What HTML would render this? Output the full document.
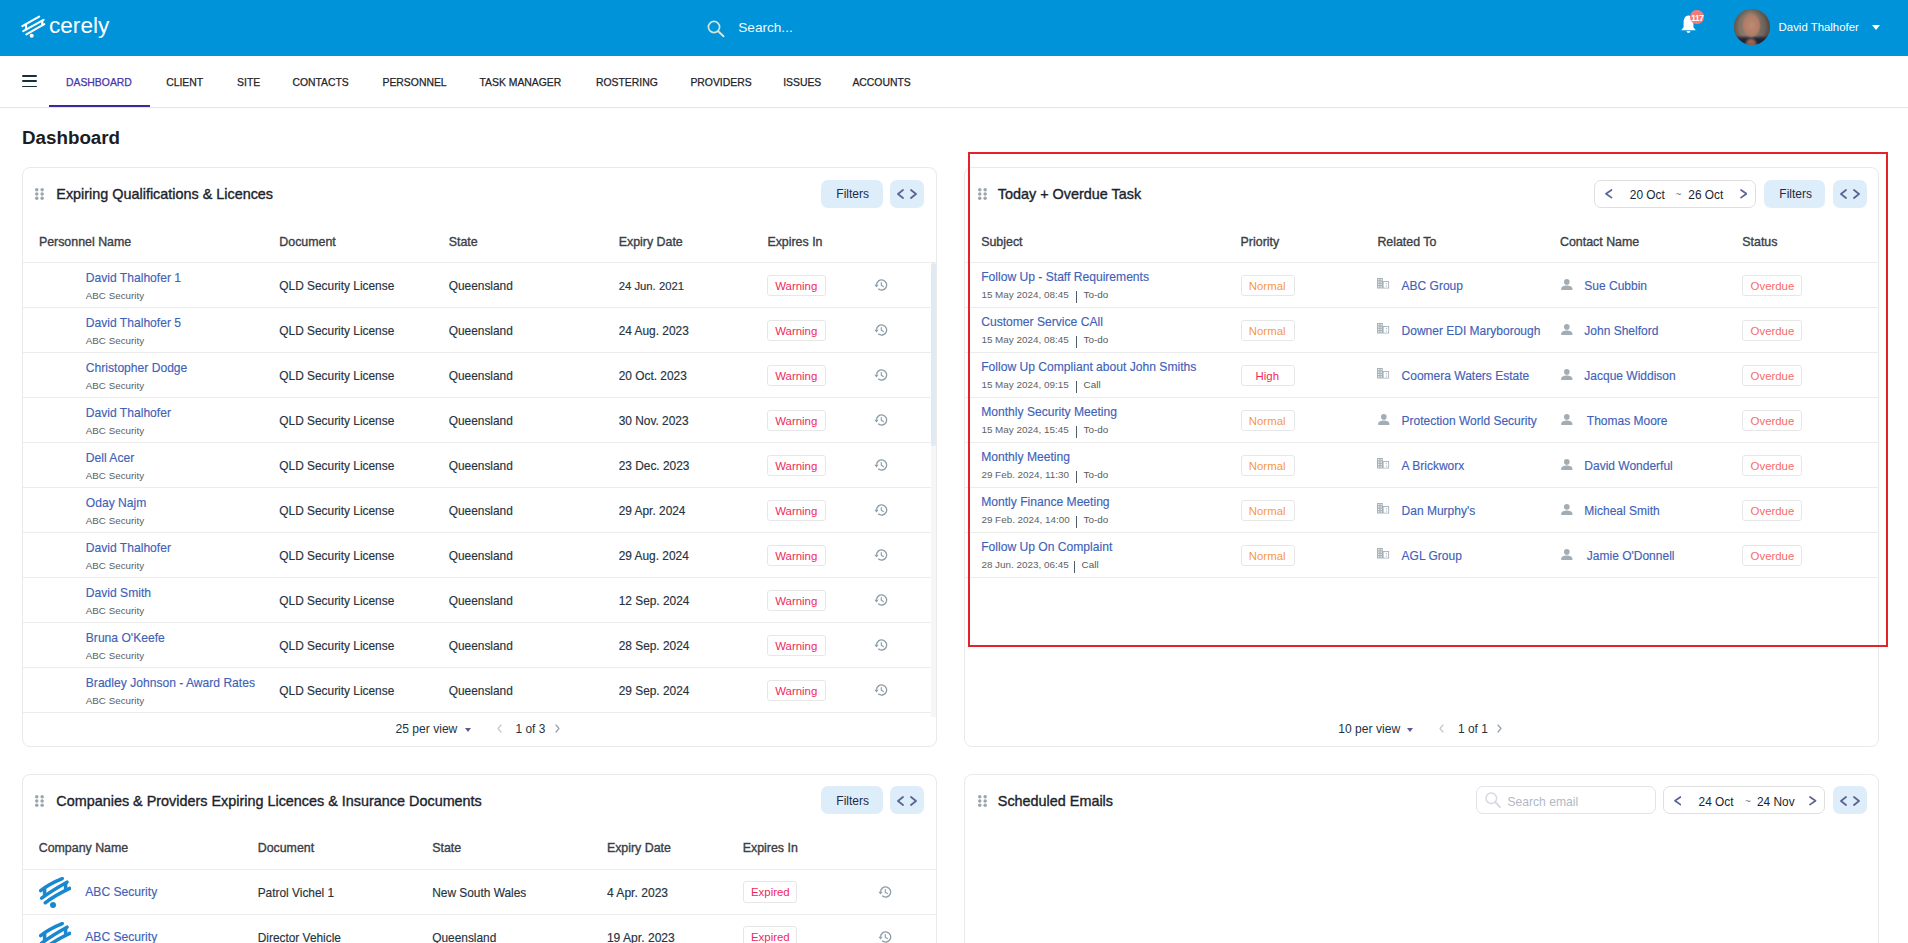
<!DOCTYPE html>
<html><head><meta charset="utf-8"><title>Dashboard</title>
<style>
html,body{margin:0;padding:0;background:#fff}
body{width:1908px;height:943px;overflow:hidden;position:relative;font-family:"Liberation Sans",sans-serif}
.a{position:absolute}
.t{position:absolute;line-height:1;white-space:nowrap}
svg.a{display:block}
</style></head><body>
<div class="a" style="left:0px;top:0px;width:1908px;height:56px;background:#0093d9"></div>
<svg class="a" style="left:20px;top:14px" width="27" height="25" viewBox="0 0 27 25"><g fill="none" stroke="#fff" stroke-width="2.1" stroke-linecap="round"><path d="M2.3 12.1 L19.2 2.7"/><path d="M3.2 17.1 L23.6 5.8"/><path d="M6.4 20.3 L24.3 10.2"/><path d="M6 10.2 L6 15.4"/><path d="M22.3 6.7 L22.3 11.2"/></g><circle cx="11.7" cy="21.8" r="2" fill="#fff"/></svg>
<div class="t" style="left:49.0px;top:15.29px;font-size:22.6px;color:#fff;font-weight:normal;">cerely</div>
<svg class="a" style="left:706px;top:19px" width="20" height="19" viewBox="0 0 20 19"><circle cx="8" cy="8" r="5.6" fill="none" stroke="#cfe6dc" stroke-width="1.7"/><path d="M12.2 12.2 L17.5 17.3" stroke="#cfe6dc" stroke-width="2" stroke-linecap="round"/></svg>
<div class="t" style="left:738.3px;top:21.44px;font-size:13.6px;color:#f2f8fc;font-weight:normal;">Search...</div>
<svg class="a" style="left:1680px;top:14px" width="17" height="20" viewBox="0 0 17 20"><path d="M8.5 1.5 C4.6 1.5 3.6 5.5 3.6 8.5 V13.2 L1.2 16.2 H15.8 L13.4 13.2 V8.5 C13.4 5.5 12.4 1.5 8.5 1.5Z" fill="#fff"/><path d="M6.6 17 H10.4 C10.4 18.3 9.6 19 8.5 19 C7.4 19 6.6 18.3 6.6 17Z" fill="#fff"/></svg>
<div class="a" style="left:1690.4px;top:10.3px;width:13.4px;height:13.4px;border-radius:50%;background:#f57b7b"></div>
<div class="t" style="left:1691.2px;top:14.05px;font-size:8.3px;color:#fff;font-weight:bold;letter-spacing:-0.3px">117</div>
<div class="a" style="left:1734px;top:9px;width:36px;height:36px;border-radius:50%;overflow:hidden;background:radial-gradient(circle 18px at 18px 18px,rgba(0,0,0,0) 0%,rgba(0,0,0,0) 72%,rgba(60,40,30,0.35) 100%),radial-gradient(ellipse 9.6px 12.5px at 17.5px 16.5px,#bd8a72 0%,#b07c67 78%,rgba(176,124,103,0) 100%),radial-gradient(ellipse 7.5px 9px at 17px 37px,#b47658 0%,#a86f55 55%,rgba(168,111,85,0) 100%),linear-gradient(180deg,rgba(0,0,0,0) 0,rgba(0,0,0,0) 26px,#22233f 30px,#1b1c36 36px),linear-gradient(90deg,#7a6a5d 0%,#918072 45%,#5f5550 100%)"></div>
<div class="t" style="left:1778.6px;top:21.91px;font-size:11.4px;color:#fff;font-weight:normal;">David Thalhofer</div>
<svg class="a" style="left:1871.5px;top:24.5px" width="8" height="5" viewBox="0 0 8 5"><path d="M0 0H8L4 5Z" fill="#fff"/></svg>
<div class="a" style="left:0px;top:107px;width:1908px;height:1px;background:#e4e4ec"></div>
<div class="a" style="left:22px;top:75.0px;width:15px;height:1.9px;background:#14303b;border-radius:1px"></div>
<div class="a" style="left:22px;top:80.3px;width:15px;height:1.9px;background:#14303b;border-radius:1px"></div>
<div class="a" style="left:22px;top:85.6px;width:15px;height:1.9px;background:#14303b;border-radius:1px"></div>
<div class="t" style="left:66.0px;top:78.16px;font-size:10.4px;color:#4534a8;font-weight:normal;-webkit-text-stroke:0.25px #4534a8">DASHBOARD</div>
<div class="t" style="left:166.2px;top:78.16px;font-size:10.4px;color:#1f242b;font-weight:normal;-webkit-text-stroke:0.25px #1f242b">CLIENT</div>
<div class="t" style="left:237.1px;top:78.16px;font-size:10.4px;color:#1f242b;font-weight:normal;-webkit-text-stroke:0.25px #1f242b">SITE</div>
<div class="t" style="left:292.4px;top:78.16px;font-size:10.4px;color:#1f242b;font-weight:normal;-webkit-text-stroke:0.25px #1f242b">CONTACTS</div>
<div class="t" style="left:382.5px;top:78.16px;font-size:10.4px;color:#1f242b;font-weight:normal;-webkit-text-stroke:0.25px #1f242b">PERSONNEL</div>
<div class="t" style="left:479.5px;top:78.16px;font-size:10.4px;color:#1f242b;font-weight:normal;-webkit-text-stroke:0.25px #1f242b">TASK MANAGER</div>
<div class="t" style="left:596.0px;top:78.16px;font-size:10.4px;color:#1f242b;font-weight:normal;-webkit-text-stroke:0.25px #1f242b">ROSTERING</div>
<div class="t" style="left:690.4px;top:78.16px;font-size:10.4px;color:#1f242b;font-weight:normal;-webkit-text-stroke:0.25px #1f242b">PROVIDERS</div>
<div class="t" style="left:783.2px;top:78.16px;font-size:10.4px;color:#1f242b;font-weight:normal;-webkit-text-stroke:0.25px #1f242b">ISSUES</div>
<div class="t" style="left:852.4px;top:78.16px;font-size:10.4px;color:#1f242b;font-weight:normal;-webkit-text-stroke:0.25px #1f242b">ACCOUNTS</div>
<div class="a" style="left:49px;top:105px;width:101px;height:2px;background:#3b2aa0"></div>
<div class="t" style="left:22.0px;top:128.72px;font-size:18.8px;color:#1b1d22;font-weight:bold;">Dashboard</div>
<div class="a" style="left:22px;top:167px;width:915px;height:580px;border:1px solid #e9e9ea;border-radius:8px;box-sizing:border-box;background:#fff"></div>
<div class="a" style="left:964px;top:167px;width:915px;height:580px;border:1px solid #e9e9ea;border-radius:8px;box-sizing:border-box;background:#fff"></div>
<div class="a" style="left:22px;top:774px;width:915px;height:226px;border:1px solid #e9e9ea;border-radius:8px;box-sizing:border-box;background:#fff"></div>
<div class="a" style="left:964px;top:774px;width:915px;height:226px;border:1px solid #e9e9ea;border-radius:8px;box-sizing:border-box;background:#fff"></div>
<svg class="a" style="left:35px;top:188.3px" width="10" height="12" viewBox="0 0 10 12"><g fill="#9aa6ae"><circle cx="1.75" cy="1.75" r="1.75"/><circle cx="7.15" cy="1.75" r="1.75"/><circle cx="1.75" cy="5.95" r="1.75"/><circle cx="7.15" cy="5.95" r="1.75"/><circle cx="1.75" cy="10.15" r="1.75"/><circle cx="7.15" cy="10.15" r="1.75"/></g></svg>
<div class="t" style="left:56.3px;top:186.76px;font-size:14.4px;color:#1c232c;font-weight:normal;-webkit-text-stroke:0.35px #1c232c">Expiring Qualifications &amp; Licences</div>
<div class="a" style="left:821px;top:180px;width:62px;height:28px;background:#deedfa;border-radius:7px"></div>
<div class="t" style="left:836.3px;top:187.90px;font-size:12px;color:#1f2a44;font-weight:normal;">Filters</div>
<div class="a" style="left:890px;top:180px;width:34px;height:28px;background:#deedfa;border-radius:7px"></div>
<svg class="a" style="left:896.5px;top:189.0px" width="7.0" height="10.0" viewBox="0 0 7.0 10.0"><path d="M6.0 1 L1 5.0 L6.0 9.0" fill="none" stroke="#5a6494" stroke-width="1.8" stroke-linecap="round" stroke-linejoin="round"/></svg>
<svg class="a" style="left:909.5px;top:189.0px" width="7.0" height="10.0" viewBox="0 0 7.0 10.0"><path d="M1 1 L6.0 5.0 L1 9.0" fill="none" stroke="#5a6494" stroke-width="1.8" stroke-linecap="round" stroke-linejoin="round"/></svg>
<div class="t" style="left:38.9px;top:236.06px;font-size:12.4px;color:#3a4046;font-weight:normal;-webkit-text-stroke:0.35px #3a4046">Personnel Name</div>
<div class="t" style="left:279.3px;top:236.06px;font-size:12.4px;color:#3a4046;font-weight:normal;-webkit-text-stroke:0.35px #3a4046">Document</div>
<div class="t" style="left:448.7px;top:236.06px;font-size:12.4px;color:#3a4046;font-weight:normal;-webkit-text-stroke:0.35px #3a4046">State</div>
<div class="t" style="left:618.7px;top:236.06px;font-size:12.4px;color:#3a4046;font-weight:normal;-webkit-text-stroke:0.35px #3a4046">Expiry Date</div>
<div class="t" style="left:767.4px;top:236.06px;font-size:12.4px;color:#3a4046;font-weight:normal;-webkit-text-stroke:0.35px #3a4046">Expires In</div>
<div class="a" style="left:23px;top:262px;width:913px;height:1px;background:#ececec"></div>
<div class="t" style="left:85.8px;top:272.12px;font-size:12.1px;color:#3f62b8;font-weight:normal;-webkit-text-stroke:0.15px currentColor">David Thalhofer 1</div>
<div class="t" style="left:85.8px;top:291.47px;font-size:9.8px;color:#5b5f63;font-weight:normal;">ABC Security</div>
<div class="t" style="left:279.3px;top:280.58px;font-size:11.9px;color:#25333f;font-weight:normal;-webkit-text-stroke:0.15px currentColor">QLD Security License</div>
<div class="t" style="left:448.7px;top:280.58px;font-size:11.9px;color:#25333f;font-weight:normal;-webkit-text-stroke:0.15px currentColor">Queensland</div>
<div class="t" style="left:618.7px;top:281.09px;font-size:11.3px;color:#25333f;font-weight:normal;-webkit-text-stroke:0.15px currentColor">24 Jun. 2021</div>
<div class="a" style="left:767px;top:275px;width:59px;height:21px;border:1px solid #e7e7e7;border-radius:3px;box-sizing:border-box;background:#fff"></div>
<div class="t" style="left:775.3px;top:281.11px;font-size:11.4px;color:#ee2a5c;font-weight:normal;">Warning</div>
<svg class="a" style="left:872.5px;top:277px" width="16" height="16" viewBox="0 0 16 16"><path d="M5.2 11.8 A5.1 5.1 0 1 0 3.5 7.8" fill="none" stroke="#8d9da8" stroke-width="1.35"/><path d="M1.4 7.7 L5.6 7.7 L3.5 10.6 Z" fill="#8d9da8"/><path d="M8.3 5.6 V8.3 L10.3 9.6" fill="none" stroke="#8d9da8" stroke-width="1.15" stroke-linecap="round" stroke-linejoin="round"/></svg>
<div class="a" style="left:23px;top:307px;width:908px;height:1px;background:#ececec"></div>
<div class="t" style="left:85.8px;top:317.12px;font-size:12.1px;color:#3f62b8;font-weight:normal;-webkit-text-stroke:0.15px currentColor">David Thalhofer 5</div>
<div class="t" style="left:85.8px;top:336.47px;font-size:9.8px;color:#5b5f63;font-weight:normal;">ABC Security</div>
<div class="t" style="left:279.3px;top:325.58px;font-size:11.9px;color:#25333f;font-weight:normal;-webkit-text-stroke:0.15px currentColor">QLD Security License</div>
<div class="t" style="left:448.7px;top:325.58px;font-size:11.9px;color:#25333f;font-weight:normal;-webkit-text-stroke:0.15px currentColor">Queensland</div>
<div class="t" style="left:618.7px;top:325.58px;font-size:11.9px;color:#25333f;font-weight:normal;-webkit-text-stroke:0.15px currentColor">24 Aug. 2023</div>
<div class="a" style="left:767px;top:320px;width:59px;height:21px;border:1px solid #e7e7e7;border-radius:3px;box-sizing:border-box;background:#fff"></div>
<div class="t" style="left:775.3px;top:326.11px;font-size:11.4px;color:#ee2a5c;font-weight:normal;">Warning</div>
<svg class="a" style="left:872.5px;top:322px" width="16" height="16" viewBox="0 0 16 16"><path d="M5.2 11.8 A5.1 5.1 0 1 0 3.5 7.8" fill="none" stroke="#8d9da8" stroke-width="1.35"/><path d="M1.4 7.7 L5.6 7.7 L3.5 10.6 Z" fill="#8d9da8"/><path d="M8.3 5.6 V8.3 L10.3 9.6" fill="none" stroke="#8d9da8" stroke-width="1.15" stroke-linecap="round" stroke-linejoin="round"/></svg>
<div class="a" style="left:23px;top:352px;width:908px;height:1px;background:#ececec"></div>
<div class="t" style="left:85.8px;top:362.12px;font-size:12.1px;color:#3f62b8;font-weight:normal;-webkit-text-stroke:0.15px currentColor">Christopher Dodge</div>
<div class="t" style="left:85.8px;top:381.47px;font-size:9.8px;color:#5b5f63;font-weight:normal;">ABC Security</div>
<div class="t" style="left:279.3px;top:370.58px;font-size:11.9px;color:#25333f;font-weight:normal;-webkit-text-stroke:0.15px currentColor">QLD Security License</div>
<div class="t" style="left:448.7px;top:370.58px;font-size:11.9px;color:#25333f;font-weight:normal;-webkit-text-stroke:0.15px currentColor">Queensland</div>
<div class="t" style="left:618.7px;top:370.58px;font-size:11.9px;color:#25333f;font-weight:normal;-webkit-text-stroke:0.15px currentColor">20 Oct. 2023</div>
<div class="a" style="left:767px;top:365px;width:59px;height:21px;border:1px solid #e7e7e7;border-radius:3px;box-sizing:border-box;background:#fff"></div>
<div class="t" style="left:775.3px;top:371.11px;font-size:11.4px;color:#ee2a5c;font-weight:normal;">Warning</div>
<svg class="a" style="left:872.5px;top:367px" width="16" height="16" viewBox="0 0 16 16"><path d="M5.2 11.8 A5.1 5.1 0 1 0 3.5 7.8" fill="none" stroke="#8d9da8" stroke-width="1.35"/><path d="M1.4 7.7 L5.6 7.7 L3.5 10.6 Z" fill="#8d9da8"/><path d="M8.3 5.6 V8.3 L10.3 9.6" fill="none" stroke="#8d9da8" stroke-width="1.15" stroke-linecap="round" stroke-linejoin="round"/></svg>
<div class="a" style="left:23px;top:397px;width:908px;height:1px;background:#ececec"></div>
<div class="t" style="left:85.8px;top:407.12px;font-size:12.1px;color:#3f62b8;font-weight:normal;-webkit-text-stroke:0.15px currentColor">David Thalhofer</div>
<div class="t" style="left:85.8px;top:426.47px;font-size:9.8px;color:#5b5f63;font-weight:normal;">ABC Security</div>
<div class="t" style="left:279.3px;top:415.58px;font-size:11.9px;color:#25333f;font-weight:normal;-webkit-text-stroke:0.15px currentColor">QLD Security License</div>
<div class="t" style="left:448.7px;top:415.58px;font-size:11.9px;color:#25333f;font-weight:normal;-webkit-text-stroke:0.15px currentColor">Queensland</div>
<div class="t" style="left:618.7px;top:415.58px;font-size:11.9px;color:#25333f;font-weight:normal;-webkit-text-stroke:0.15px currentColor">30 Nov. 2023</div>
<div class="a" style="left:767px;top:410px;width:59px;height:21px;border:1px solid #e7e7e7;border-radius:3px;box-sizing:border-box;background:#fff"></div>
<div class="t" style="left:775.3px;top:416.11px;font-size:11.4px;color:#ee2a5c;font-weight:normal;">Warning</div>
<svg class="a" style="left:872.5px;top:412px" width="16" height="16" viewBox="0 0 16 16"><path d="M5.2 11.8 A5.1 5.1 0 1 0 3.5 7.8" fill="none" stroke="#8d9da8" stroke-width="1.35"/><path d="M1.4 7.7 L5.6 7.7 L3.5 10.6 Z" fill="#8d9da8"/><path d="M8.3 5.6 V8.3 L10.3 9.6" fill="none" stroke="#8d9da8" stroke-width="1.15" stroke-linecap="round" stroke-linejoin="round"/></svg>
<div class="a" style="left:23px;top:442px;width:908px;height:1px;background:#ececec"></div>
<div class="t" style="left:85.8px;top:452.12px;font-size:12.1px;color:#3f62b8;font-weight:normal;-webkit-text-stroke:0.15px currentColor">Dell Acer</div>
<div class="t" style="left:85.8px;top:471.47px;font-size:9.8px;color:#5b5f63;font-weight:normal;">ABC Security</div>
<div class="t" style="left:279.3px;top:460.58px;font-size:11.9px;color:#25333f;font-weight:normal;-webkit-text-stroke:0.15px currentColor">QLD Security License</div>
<div class="t" style="left:448.7px;top:460.58px;font-size:11.9px;color:#25333f;font-weight:normal;-webkit-text-stroke:0.15px currentColor">Queensland</div>
<div class="t" style="left:618.7px;top:460.58px;font-size:11.9px;color:#25333f;font-weight:normal;-webkit-text-stroke:0.15px currentColor">23 Dec. 2023</div>
<div class="a" style="left:767px;top:455px;width:59px;height:21px;border:1px solid #e7e7e7;border-radius:3px;box-sizing:border-box;background:#fff"></div>
<div class="t" style="left:775.3px;top:461.11px;font-size:11.4px;color:#ee2a5c;font-weight:normal;">Warning</div>
<svg class="a" style="left:872.5px;top:457px" width="16" height="16" viewBox="0 0 16 16"><path d="M5.2 11.8 A5.1 5.1 0 1 0 3.5 7.8" fill="none" stroke="#8d9da8" stroke-width="1.35"/><path d="M1.4 7.7 L5.6 7.7 L3.5 10.6 Z" fill="#8d9da8"/><path d="M8.3 5.6 V8.3 L10.3 9.6" fill="none" stroke="#8d9da8" stroke-width="1.15" stroke-linecap="round" stroke-linejoin="round"/></svg>
<div class="a" style="left:23px;top:487px;width:908px;height:1px;background:#ececec"></div>
<div class="t" style="left:85.8px;top:497.12px;font-size:12.1px;color:#3f62b8;font-weight:normal;-webkit-text-stroke:0.15px currentColor">Oday Najm</div>
<div class="t" style="left:85.8px;top:516.47px;font-size:9.8px;color:#5b5f63;font-weight:normal;">ABC Security</div>
<div class="t" style="left:279.3px;top:505.58px;font-size:11.9px;color:#25333f;font-weight:normal;-webkit-text-stroke:0.15px currentColor">QLD Security License</div>
<div class="t" style="left:448.7px;top:505.58px;font-size:11.9px;color:#25333f;font-weight:normal;-webkit-text-stroke:0.15px currentColor">Queensland</div>
<div class="t" style="left:618.7px;top:505.58px;font-size:11.9px;color:#25333f;font-weight:normal;-webkit-text-stroke:0.15px currentColor">29 Apr. 2024</div>
<div class="a" style="left:767px;top:500px;width:59px;height:21px;border:1px solid #e7e7e7;border-radius:3px;box-sizing:border-box;background:#fff"></div>
<div class="t" style="left:775.3px;top:506.11px;font-size:11.4px;color:#ee2a5c;font-weight:normal;">Warning</div>
<svg class="a" style="left:872.5px;top:502px" width="16" height="16" viewBox="0 0 16 16"><path d="M5.2 11.8 A5.1 5.1 0 1 0 3.5 7.8" fill="none" stroke="#8d9da8" stroke-width="1.35"/><path d="M1.4 7.7 L5.6 7.7 L3.5 10.6 Z" fill="#8d9da8"/><path d="M8.3 5.6 V8.3 L10.3 9.6" fill="none" stroke="#8d9da8" stroke-width="1.15" stroke-linecap="round" stroke-linejoin="round"/></svg>
<div class="a" style="left:23px;top:532px;width:908px;height:1px;background:#ececec"></div>
<div class="t" style="left:85.8px;top:542.12px;font-size:12.1px;color:#3f62b8;font-weight:normal;-webkit-text-stroke:0.15px currentColor">David Thalhofer</div>
<div class="t" style="left:85.8px;top:561.47px;font-size:9.8px;color:#5b5f63;font-weight:normal;">ABC Security</div>
<div class="t" style="left:279.3px;top:550.58px;font-size:11.9px;color:#25333f;font-weight:normal;-webkit-text-stroke:0.15px currentColor">QLD Security License</div>
<div class="t" style="left:448.7px;top:550.58px;font-size:11.9px;color:#25333f;font-weight:normal;-webkit-text-stroke:0.15px currentColor">Queensland</div>
<div class="t" style="left:618.7px;top:550.58px;font-size:11.9px;color:#25333f;font-weight:normal;-webkit-text-stroke:0.15px currentColor">29 Aug. 2024</div>
<div class="a" style="left:767px;top:545px;width:59px;height:21px;border:1px solid #e7e7e7;border-radius:3px;box-sizing:border-box;background:#fff"></div>
<div class="t" style="left:775.3px;top:551.11px;font-size:11.4px;color:#ee2a5c;font-weight:normal;">Warning</div>
<svg class="a" style="left:872.5px;top:547px" width="16" height="16" viewBox="0 0 16 16"><path d="M5.2 11.8 A5.1 5.1 0 1 0 3.5 7.8" fill="none" stroke="#8d9da8" stroke-width="1.35"/><path d="M1.4 7.7 L5.6 7.7 L3.5 10.6 Z" fill="#8d9da8"/><path d="M8.3 5.6 V8.3 L10.3 9.6" fill="none" stroke="#8d9da8" stroke-width="1.15" stroke-linecap="round" stroke-linejoin="round"/></svg>
<div class="a" style="left:23px;top:577px;width:908px;height:1px;background:#ececec"></div>
<div class="t" style="left:85.8px;top:587.12px;font-size:12.1px;color:#3f62b8;font-weight:normal;-webkit-text-stroke:0.15px currentColor">David Smith</div>
<div class="t" style="left:85.8px;top:606.47px;font-size:9.8px;color:#5b5f63;font-weight:normal;">ABC Security</div>
<div class="t" style="left:279.3px;top:595.58px;font-size:11.9px;color:#25333f;font-weight:normal;-webkit-text-stroke:0.15px currentColor">QLD Security License</div>
<div class="t" style="left:448.7px;top:595.58px;font-size:11.9px;color:#25333f;font-weight:normal;-webkit-text-stroke:0.15px currentColor">Queensland</div>
<div class="t" style="left:618.7px;top:595.58px;font-size:11.9px;color:#25333f;font-weight:normal;-webkit-text-stroke:0.15px currentColor">12 Sep. 2024</div>
<div class="a" style="left:767px;top:590px;width:59px;height:21px;border:1px solid #e7e7e7;border-radius:3px;box-sizing:border-box;background:#fff"></div>
<div class="t" style="left:775.3px;top:596.11px;font-size:11.4px;color:#ee2a5c;font-weight:normal;">Warning</div>
<svg class="a" style="left:872.5px;top:592px" width="16" height="16" viewBox="0 0 16 16"><path d="M5.2 11.8 A5.1 5.1 0 1 0 3.5 7.8" fill="none" stroke="#8d9da8" stroke-width="1.35"/><path d="M1.4 7.7 L5.6 7.7 L3.5 10.6 Z" fill="#8d9da8"/><path d="M8.3 5.6 V8.3 L10.3 9.6" fill="none" stroke="#8d9da8" stroke-width="1.15" stroke-linecap="round" stroke-linejoin="round"/></svg>
<div class="a" style="left:23px;top:622px;width:908px;height:1px;background:#ececec"></div>
<div class="t" style="left:85.8px;top:632.12px;font-size:12.1px;color:#3f62b8;font-weight:normal;-webkit-text-stroke:0.15px currentColor">Bruna O&#x27;Keefe</div>
<div class="t" style="left:85.8px;top:651.47px;font-size:9.8px;color:#5b5f63;font-weight:normal;">ABC Security</div>
<div class="t" style="left:279.3px;top:640.58px;font-size:11.9px;color:#25333f;font-weight:normal;-webkit-text-stroke:0.15px currentColor">QLD Security License</div>
<div class="t" style="left:448.7px;top:640.58px;font-size:11.9px;color:#25333f;font-weight:normal;-webkit-text-stroke:0.15px currentColor">Queensland</div>
<div class="t" style="left:618.7px;top:640.58px;font-size:11.9px;color:#25333f;font-weight:normal;-webkit-text-stroke:0.15px currentColor">28 Sep. 2024</div>
<div class="a" style="left:767px;top:635px;width:59px;height:21px;border:1px solid #e7e7e7;border-radius:3px;box-sizing:border-box;background:#fff"></div>
<div class="t" style="left:775.3px;top:641.11px;font-size:11.4px;color:#ee2a5c;font-weight:normal;">Warning</div>
<svg class="a" style="left:872.5px;top:637px" width="16" height="16" viewBox="0 0 16 16"><path d="M5.2 11.8 A5.1 5.1 0 1 0 3.5 7.8" fill="none" stroke="#8d9da8" stroke-width="1.35"/><path d="M1.4 7.7 L5.6 7.7 L3.5 10.6 Z" fill="#8d9da8"/><path d="M8.3 5.6 V8.3 L10.3 9.6" fill="none" stroke="#8d9da8" stroke-width="1.15" stroke-linecap="round" stroke-linejoin="round"/></svg>
<div class="a" style="left:23px;top:667px;width:908px;height:1px;background:#ececec"></div>
<div class="t" style="left:85.8px;top:677.12px;font-size:12.1px;color:#3f62b8;font-weight:normal;-webkit-text-stroke:0.15px currentColor">Bradley Johnson - Award Rates</div>
<div class="t" style="left:85.8px;top:696.47px;font-size:9.8px;color:#5b5f63;font-weight:normal;">ABC Security</div>
<div class="t" style="left:279.3px;top:685.58px;font-size:11.9px;color:#25333f;font-weight:normal;-webkit-text-stroke:0.15px currentColor">QLD Security License</div>
<div class="t" style="left:448.7px;top:685.58px;font-size:11.9px;color:#25333f;font-weight:normal;-webkit-text-stroke:0.15px currentColor">Queensland</div>
<div class="t" style="left:618.7px;top:685.58px;font-size:11.9px;color:#25333f;font-weight:normal;-webkit-text-stroke:0.15px currentColor">29 Sep. 2024</div>
<div class="a" style="left:767px;top:680px;width:59px;height:21px;border:1px solid #e7e7e7;border-radius:3px;box-sizing:border-box;background:#fff"></div>
<div class="t" style="left:775.3px;top:686.11px;font-size:11.4px;color:#ee2a5c;font-weight:normal;">Warning</div>
<svg class="a" style="left:872.5px;top:682px" width="16" height="16" viewBox="0 0 16 16"><path d="M5.2 11.8 A5.1 5.1 0 1 0 3.5 7.8" fill="none" stroke="#8d9da8" stroke-width="1.35"/><path d="M1.4 7.7 L5.6 7.7 L3.5 10.6 Z" fill="#8d9da8"/><path d="M8.3 5.6 V8.3 L10.3 9.6" fill="none" stroke="#8d9da8" stroke-width="1.15" stroke-linecap="round" stroke-linejoin="round"/></svg>
<div class="a" style="left:23px;top:712px;width:908px;height:1px;background:#ececec"></div>
<div class="a" style="left:931px;top:263px;width:5px;height:454px;background:#f6f6f7"></div>
<div class="a" style="left:931px;top:263px;width:5px;height:183px;background:#e1e9f3;border-radius:3px"></div>
<div class="t" style="left:395.5px;top:723.22px;font-size:12.1px;color:#25333f;font-weight:normal;">25 per view</div>
<svg class="a" style="left:465.2px;top:728.0px" width="6" height="4" viewBox="0 0 6 4"><path d="M0 0H6L3 4Z" fill="#5c5a90"/></svg>
<svg class="a" style="left:497.2px;top:723.7px" width="5.0" height="9.0" viewBox="0 0 5.0 9.0"><path d="M4.0 1 L1 4.5 L4.0 8.0" fill="none" stroke="#c2cad0" stroke-width="1.2" stroke-linecap="round" stroke-linejoin="round"/></svg>
<div class="t" style="left:515.6px;top:724.18px;font-size:11.9px;color:#25333f;font-weight:normal;">1 of 3</div>
<svg class="a" style="left:555px;top:723.7px" width="5" height="9.0" viewBox="0 0 5 9.0"><path d="M1 1 L4 4.5 L1 8.0" fill="none" stroke="#95a3ad" stroke-width="1.2" stroke-linecap="round" stroke-linejoin="round"/></svg>
<svg class="a" style="left:977.8px;top:188.3px" width="10" height="12" viewBox="0 0 10 12"><g fill="#9aa6ae"><circle cx="1.75" cy="1.75" r="1.75"/><circle cx="7.15" cy="1.75" r="1.75"/><circle cx="1.75" cy="5.95" r="1.75"/><circle cx="7.15" cy="5.95" r="1.75"/><circle cx="1.75" cy="10.15" r="1.75"/><circle cx="7.15" cy="10.15" r="1.75"/></g></svg>
<div class="t" style="left:997.8px;top:186.76px;font-size:14.4px;color:#1c232c;font-weight:normal;-webkit-text-stroke:0.35px #1c232c">Today + Overdue Task</div>
<div class="a" style="left:1594px;top:180px;width:162px;height:28px;border:1px solid #dfdfdf;border-radius:7px;box-sizing:border-box;background:#fff"></div>
<svg class="a" style="left:1605px;top:189.2px" width="7.5" height="9.600000000000023" viewBox="0 0 7.5 9.600000000000023"><path d="M6.5 1 L1 4.800000000000011 L6.5 8.600000000000023" fill="none" stroke="#5a6494" stroke-width="1.7" stroke-linecap="round" stroke-linejoin="round"/></svg>
<svg class="a" style="left:1739.7px;top:189.2px" width="7.5" height="9.600000000000023" viewBox="0 0 7.5 9.600000000000023"><path d="M1 1 L6.5 4.800000000000011 L1 8.600000000000023" fill="none" stroke="#5a6494" stroke-width="1.7" stroke-linecap="round" stroke-linejoin="round"/></svg>
<div class="t" style="left:1629.8px;top:189.99px;font-size:11.9px;color:#1b1f2e;font-weight:normal;">20 Oct</div>
<div class="t" style="left:1675.5px;top:190.10px;font-size:10px;color:#777;font-weight:normal;">~</div>
<div class="t" style="left:1688.3px;top:189.99px;font-size:11.9px;color:#1b1f2e;font-weight:normal;">26 Oct</div>
<div class="a" style="left:1764px;top:180px;width:61px;height:28px;background:#deedfa;border-radius:7px"></div>
<div class="t" style="left:1779.3px;top:187.90px;font-size:12px;color:#1f2a44;font-weight:normal;">Filters</div>
<div class="a" style="left:1833px;top:180px;width:34px;height:28px;background:#deedfa;border-radius:7px"></div>
<svg class="a" style="left:1839.5px;top:189.0px" width="7.0" height="10.0" viewBox="0 0 7.0 10.0"><path d="M6.0 1 L1 5.0 L6.0 9.0" fill="none" stroke="#5a6494" stroke-width="1.8" stroke-linecap="round" stroke-linejoin="round"/></svg>
<svg class="a" style="left:1852.5px;top:189.0px" width="7.0" height="10.0" viewBox="0 0 7.0 10.0"><path d="M1 1 L6.0 5.0 L1 9.0" fill="none" stroke="#5a6494" stroke-width="1.8" stroke-linecap="round" stroke-linejoin="round"/></svg>
<div class="t" style="left:981.2px;top:236.06px;font-size:12.4px;color:#3a4046;font-weight:normal;-webkit-text-stroke:0.35px #3a4046">Subject</div>
<div class="t" style="left:1240.6px;top:236.06px;font-size:12.4px;color:#3a4046;font-weight:normal;-webkit-text-stroke:0.35px #3a4046">Priority</div>
<div class="t" style="left:1377.4px;top:236.06px;font-size:12.4px;color:#3a4046;font-weight:normal;-webkit-text-stroke:0.35px #3a4046">Related To</div>
<div class="t" style="left:1560.0px;top:236.06px;font-size:12.4px;color:#3a4046;font-weight:normal;-webkit-text-stroke:0.35px #3a4046">Contact Name</div>
<div class="t" style="left:1742.3px;top:236.06px;font-size:12.4px;color:#3a4046;font-weight:normal;-webkit-text-stroke:0.35px #3a4046">Status</div>
<div class="a" style="left:965px;top:262px;width:913px;height:1px;background:#ececec"></div>
<div class="t" style="left:981.2px;top:271.01px;font-size:12.1px;color:#3f62b8;font-weight:normal;-webkit-text-stroke:0.15px currentColor">Follow Up - Staff Requirements</div>
<div class="t" style="left:981.4px;top:290.08px;font-size:9.9px;color:#5e6266;font-weight:normal;">15 May 2024, 08:45</div>
<div class="a" style="left:1075.9px;top:291px;width:1.3px;height:11.5px;background:#4d5d6a"></div>
<div class="t" style="left:1083.6px;top:290.08px;font-size:9.9px;color:#55595d;font-weight:normal;">To-do</div>
<div class="a" style="left:1241px;top:275px;width:54px;height:21px;border:1px solid #e7e7e7;border-radius:3px;box-sizing:border-box;background:#fff"></div>
<div class="t" style="left:1248.8px;top:281.11px;font-size:11.4px;color:#f7993d;font-weight:normal;">Normal</div>
<svg class="a" style="left:1377px;top:278.3px" width="13" height="11" viewBox="0 0 13 11"><path d="M0 0H5.8V2.9H12.1V10.5H0Z" fill="#a5b1b8"/><g fill="#fff" opacity="0.75"><rect x="0.9" y="1" width="1.5" height="1.3"/><rect x="3.5" y="1" width="1.4" height="1.3"/><rect x="0.9" y="3.4" width="1.5" height="1.3"/><rect x="3.5" y="3.4" width="1.4" height="1.3"/><rect x="0.9" y="5.8" width="1.5" height="1.3"/><rect x="3.5" y="5.8" width="1.4" height="1.3"/><rect x="0.9" y="8.2" width="1.5" height="1.3"/><rect x="3.5" y="8.2" width="1.4" height="1.3"/></g><rect x="6.6" y="3.9" width="4.6" height="5.8" fill="#fff"/><g fill="#a5b1b8"><rect x="8.9" y="5.2" width="1.1" height="1"/><rect x="8.9" y="7.6" width="1.1" height="1"/></g></svg>
<div class="t" style="left:1401.6px;top:279.80px;font-size:12px;color:#3f62b8;font-weight:normal;-webkit-text-stroke:0.15px currentColor">ABC Group</div>
<svg class="a" style="left:1560.5px;top:278.5px" width="12" height="11" viewBox="0 0 12 11"><circle cx="5.8" cy="2.9" r="2.8" fill="#a3adb3"/><path d="M0.2 11 V9.6 C0.2 7.3 3.2 6.4 5.8 6.4 C8.4 6.4 11.4 7.3 11.4 9.6 V11 Z" fill="#a3adb3"/></svg>
<div class="t" style="left:1584.3px;top:279.80px;font-size:12px;color:#3f62b8;font-weight:normal;-webkit-text-stroke:0.15px currentColor">Sue Cubbin</div>
<div class="a" style="left:1742px;top:275px;width:60px;height:21px;border:1px solid #e7e7e7;border-radius:3px;box-sizing:border-box;background:#fff"></div>
<div class="t" style="left:1750.6px;top:281.11px;font-size:11.4px;color:#f56b6b;font-weight:normal;">Overdue</div>
<div class="a" style="left:965px;top:307px;width:913px;height:1px;background:#ececec"></div>
<div class="t" style="left:981.2px;top:316.01px;font-size:12.1px;color:#3f62b8;font-weight:normal;-webkit-text-stroke:0.15px currentColor">Customer Service CAll</div>
<div class="t" style="left:981.4px;top:335.08px;font-size:9.9px;color:#5e6266;font-weight:normal;">15 May 2024, 08:45</div>
<div class="a" style="left:1075.9px;top:336px;width:1.3px;height:11.5px;background:#4d5d6a"></div>
<div class="t" style="left:1083.6px;top:335.08px;font-size:9.9px;color:#55595d;font-weight:normal;">To-do</div>
<div class="a" style="left:1241px;top:320px;width:54px;height:21px;border:1px solid #e7e7e7;border-radius:3px;box-sizing:border-box;background:#fff"></div>
<div class="t" style="left:1248.8px;top:326.11px;font-size:11.4px;color:#f7993d;font-weight:normal;">Normal</div>
<svg class="a" style="left:1377px;top:323.3px" width="13" height="11" viewBox="0 0 13 11"><path d="M0 0H5.8V2.9H12.1V10.5H0Z" fill="#a5b1b8"/><g fill="#fff" opacity="0.75"><rect x="0.9" y="1" width="1.5" height="1.3"/><rect x="3.5" y="1" width="1.4" height="1.3"/><rect x="0.9" y="3.4" width="1.5" height="1.3"/><rect x="3.5" y="3.4" width="1.4" height="1.3"/><rect x="0.9" y="5.8" width="1.5" height="1.3"/><rect x="3.5" y="5.8" width="1.4" height="1.3"/><rect x="0.9" y="8.2" width="1.5" height="1.3"/><rect x="3.5" y="8.2" width="1.4" height="1.3"/></g><rect x="6.6" y="3.9" width="4.6" height="5.8" fill="#fff"/><g fill="#a5b1b8"><rect x="8.9" y="5.2" width="1.1" height="1"/><rect x="8.9" y="7.6" width="1.1" height="1"/></g></svg>
<div class="t" style="left:1401.6px;top:324.80px;font-size:12px;color:#3f62b8;font-weight:normal;-webkit-text-stroke:0.15px currentColor">Downer EDI Maryborough</div>
<svg class="a" style="left:1560.5px;top:323.5px" width="12" height="11" viewBox="0 0 12 11"><circle cx="5.8" cy="2.9" r="2.8" fill="#a3adb3"/><path d="M0.2 11 V9.6 C0.2 7.3 3.2 6.4 5.8 6.4 C8.4 6.4 11.4 7.3 11.4 9.6 V11 Z" fill="#a3adb3"/></svg>
<div class="t" style="left:1584.3px;top:324.80px;font-size:12px;color:#3f62b8;font-weight:normal;-webkit-text-stroke:0.15px currentColor">John Shelford</div>
<div class="a" style="left:1742px;top:320px;width:60px;height:21px;border:1px solid #e7e7e7;border-radius:3px;box-sizing:border-box;background:#fff"></div>
<div class="t" style="left:1750.6px;top:326.11px;font-size:11.4px;color:#f56b6b;font-weight:normal;">Overdue</div>
<div class="a" style="left:965px;top:352px;width:913px;height:1px;background:#ececec"></div>
<div class="t" style="left:981.2px;top:361.01px;font-size:12.1px;color:#3f62b8;font-weight:normal;-webkit-text-stroke:0.15px currentColor">Follow Up Compliant about John Smiths</div>
<div class="t" style="left:981.4px;top:380.08px;font-size:9.9px;color:#5e6266;font-weight:normal;">15 May 2024, 09:15</div>
<div class="a" style="left:1075.9px;top:381px;width:1.3px;height:11.5px;background:#4d5d6a"></div>
<div class="t" style="left:1083.6px;top:380.08px;font-size:9.9px;color:#55595d;font-weight:normal;">Call</div>
<div class="a" style="left:1241px;top:365px;width:54px;height:21px;border:1px solid #e7e7e7;border-radius:3px;box-sizing:border-box;background:#fff"></div>
<div class="t" style="left:1255.6px;top:371.11px;font-size:11.4px;color:#ee2a5c;font-weight:normal;">High</div>
<svg class="a" style="left:1377px;top:368.3px" width="13" height="11" viewBox="0 0 13 11"><path d="M0 0H5.8V2.9H12.1V10.5H0Z" fill="#a5b1b8"/><g fill="#fff" opacity="0.75"><rect x="0.9" y="1" width="1.5" height="1.3"/><rect x="3.5" y="1" width="1.4" height="1.3"/><rect x="0.9" y="3.4" width="1.5" height="1.3"/><rect x="3.5" y="3.4" width="1.4" height="1.3"/><rect x="0.9" y="5.8" width="1.5" height="1.3"/><rect x="3.5" y="5.8" width="1.4" height="1.3"/><rect x="0.9" y="8.2" width="1.5" height="1.3"/><rect x="3.5" y="8.2" width="1.4" height="1.3"/></g><rect x="6.6" y="3.9" width="4.6" height="5.8" fill="#fff"/><g fill="#a5b1b8"><rect x="8.9" y="5.2" width="1.1" height="1"/><rect x="8.9" y="7.6" width="1.1" height="1"/></g></svg>
<div class="t" style="left:1401.6px;top:369.80px;font-size:12px;color:#3f62b8;font-weight:normal;-webkit-text-stroke:0.15px currentColor">Coomera Waters Estate</div>
<svg class="a" style="left:1560.5px;top:368.5px" width="12" height="11" viewBox="0 0 12 11"><circle cx="5.8" cy="2.9" r="2.8" fill="#a3adb3"/><path d="M0.2 11 V9.6 C0.2 7.3 3.2 6.4 5.8 6.4 C8.4 6.4 11.4 7.3 11.4 9.6 V11 Z" fill="#a3adb3"/></svg>
<div class="t" style="left:1584.3px;top:369.80px;font-size:12px;color:#3f62b8;font-weight:normal;-webkit-text-stroke:0.15px currentColor">Jacque Widdison</div>
<div class="a" style="left:1742px;top:365px;width:60px;height:21px;border:1px solid #e7e7e7;border-radius:3px;box-sizing:border-box;background:#fff"></div>
<div class="t" style="left:1750.6px;top:371.11px;font-size:11.4px;color:#f56b6b;font-weight:normal;">Overdue</div>
<div class="a" style="left:965px;top:397px;width:913px;height:1px;background:#ececec"></div>
<div class="t" style="left:981.2px;top:406.01px;font-size:12.1px;color:#3f62b8;font-weight:normal;-webkit-text-stroke:0.15px currentColor">Monthly Security Meeting</div>
<div class="t" style="left:981.4px;top:425.08px;font-size:9.9px;color:#5e6266;font-weight:normal;">15 May 2024, 15:45</div>
<div class="a" style="left:1075.9px;top:426px;width:1.3px;height:11.5px;background:#4d5d6a"></div>
<div class="t" style="left:1083.6px;top:425.08px;font-size:9.9px;color:#55595d;font-weight:normal;">To-do</div>
<div class="a" style="left:1241px;top:410px;width:54px;height:21px;border:1px solid #e7e7e7;border-radius:3px;box-sizing:border-box;background:#fff"></div>
<div class="t" style="left:1248.8px;top:416.11px;font-size:11.4px;color:#f7993d;font-weight:normal;">Normal</div>
<svg class="a" style="left:1377.5px;top:413.5px" width="12" height="11" viewBox="0 0 12 11"><circle cx="5.8" cy="2.9" r="2.8" fill="#a3adb3"/><path d="M0.2 11 V9.6 C0.2 7.3 3.2 6.4 5.8 6.4 C8.4 6.4 11.4 7.3 11.4 9.6 V11 Z" fill="#a3adb3"/></svg>
<div class="t" style="left:1401.6px;top:414.80px;font-size:12px;color:#3f62b8;font-weight:normal;-webkit-text-stroke:0.15px currentColor">Protection World Security</div>
<svg class="a" style="left:1560.5px;top:413.5px" width="12" height="11" viewBox="0 0 12 11"><circle cx="5.8" cy="2.9" r="2.8" fill="#a3adb3"/><path d="M0.2 11 V9.6 C0.2 7.3 3.2 6.4 5.8 6.4 C8.4 6.4 11.4 7.3 11.4 9.6 V11 Z" fill="#a3adb3"/></svg>
<div class="t" style="left:1586.8px;top:414.80px;font-size:12px;color:#3f62b8;font-weight:normal;-webkit-text-stroke:0.15px currentColor">Thomas Moore</div>
<div class="a" style="left:1742px;top:410px;width:60px;height:21px;border:1px solid #e7e7e7;border-radius:3px;box-sizing:border-box;background:#fff"></div>
<div class="t" style="left:1750.6px;top:416.11px;font-size:11.4px;color:#f56b6b;font-weight:normal;">Overdue</div>
<div class="a" style="left:965px;top:442px;width:913px;height:1px;background:#ececec"></div>
<div class="t" style="left:981.2px;top:451.01px;font-size:12.1px;color:#3f62b8;font-weight:normal;-webkit-text-stroke:0.15px currentColor">Monthly Meeting</div>
<div class="t" style="left:981.4px;top:470.08px;font-size:9.9px;color:#5e6266;font-weight:normal;">29 Feb. 2024, 11:30</div>
<div class="a" style="left:1075.9px;top:471px;width:1.3px;height:11.5px;background:#4d5d6a"></div>
<div class="t" style="left:1083.6px;top:470.08px;font-size:9.9px;color:#55595d;font-weight:normal;">To-do</div>
<div class="a" style="left:1241px;top:455px;width:54px;height:21px;border:1px solid #e7e7e7;border-radius:3px;box-sizing:border-box;background:#fff"></div>
<div class="t" style="left:1248.8px;top:461.11px;font-size:11.4px;color:#f7993d;font-weight:normal;">Normal</div>
<svg class="a" style="left:1377px;top:458.3px" width="13" height="11" viewBox="0 0 13 11"><path d="M0 0H5.8V2.9H12.1V10.5H0Z" fill="#a5b1b8"/><g fill="#fff" opacity="0.75"><rect x="0.9" y="1" width="1.5" height="1.3"/><rect x="3.5" y="1" width="1.4" height="1.3"/><rect x="0.9" y="3.4" width="1.5" height="1.3"/><rect x="3.5" y="3.4" width="1.4" height="1.3"/><rect x="0.9" y="5.8" width="1.5" height="1.3"/><rect x="3.5" y="5.8" width="1.4" height="1.3"/><rect x="0.9" y="8.2" width="1.5" height="1.3"/><rect x="3.5" y="8.2" width="1.4" height="1.3"/></g><rect x="6.6" y="3.9" width="4.6" height="5.8" fill="#fff"/><g fill="#a5b1b8"><rect x="8.9" y="5.2" width="1.1" height="1"/><rect x="8.9" y="7.6" width="1.1" height="1"/></g></svg>
<div class="t" style="left:1401.6px;top:459.80px;font-size:12px;color:#3f62b8;font-weight:normal;-webkit-text-stroke:0.15px currentColor">A Brickworx</div>
<svg class="a" style="left:1560.5px;top:458.5px" width="12" height="11" viewBox="0 0 12 11"><circle cx="5.8" cy="2.9" r="2.8" fill="#a3adb3"/><path d="M0.2 11 V9.6 C0.2 7.3 3.2 6.4 5.8 6.4 C8.4 6.4 11.4 7.3 11.4 9.6 V11 Z" fill="#a3adb3"/></svg>
<div class="t" style="left:1584.3px;top:459.80px;font-size:12px;color:#3f62b8;font-weight:normal;-webkit-text-stroke:0.15px currentColor">David Wonderful</div>
<div class="a" style="left:1742px;top:455px;width:60px;height:21px;border:1px solid #e7e7e7;border-radius:3px;box-sizing:border-box;background:#fff"></div>
<div class="t" style="left:1750.6px;top:461.11px;font-size:11.4px;color:#f56b6b;font-weight:normal;">Overdue</div>
<div class="a" style="left:965px;top:487px;width:913px;height:1px;background:#ececec"></div>
<div class="t" style="left:981.2px;top:496.01px;font-size:12.1px;color:#3f62b8;font-weight:normal;-webkit-text-stroke:0.15px currentColor">Montly Finance Meeting</div>
<div class="t" style="left:981.4px;top:515.09px;font-size:9.9px;color:#5e6266;font-weight:normal;">29 Feb. 2024, 14:00</div>
<div class="a" style="left:1075.9px;top:516px;width:1.3px;height:11.5px;background:#4d5d6a"></div>
<div class="t" style="left:1083.6px;top:515.09px;font-size:9.9px;color:#55595d;font-weight:normal;">To-do</div>
<div class="a" style="left:1241px;top:500px;width:54px;height:21px;border:1px solid #e7e7e7;border-radius:3px;box-sizing:border-box;background:#fff"></div>
<div class="t" style="left:1248.8px;top:506.11px;font-size:11.4px;color:#f7993d;font-weight:normal;">Normal</div>
<svg class="a" style="left:1377px;top:503.3px" width="13" height="11" viewBox="0 0 13 11"><path d="M0 0H5.8V2.9H12.1V10.5H0Z" fill="#a5b1b8"/><g fill="#fff" opacity="0.75"><rect x="0.9" y="1" width="1.5" height="1.3"/><rect x="3.5" y="1" width="1.4" height="1.3"/><rect x="0.9" y="3.4" width="1.5" height="1.3"/><rect x="3.5" y="3.4" width="1.4" height="1.3"/><rect x="0.9" y="5.8" width="1.5" height="1.3"/><rect x="3.5" y="5.8" width="1.4" height="1.3"/><rect x="0.9" y="8.2" width="1.5" height="1.3"/><rect x="3.5" y="8.2" width="1.4" height="1.3"/></g><rect x="6.6" y="3.9" width="4.6" height="5.8" fill="#fff"/><g fill="#a5b1b8"><rect x="8.9" y="5.2" width="1.1" height="1"/><rect x="8.9" y="7.6" width="1.1" height="1"/></g></svg>
<div class="t" style="left:1401.6px;top:504.80px;font-size:12px;color:#3f62b8;font-weight:normal;-webkit-text-stroke:0.15px currentColor">Dan Murphy&#x27;s</div>
<svg class="a" style="left:1560.5px;top:503.5px" width="12" height="11" viewBox="0 0 12 11"><circle cx="5.8" cy="2.9" r="2.8" fill="#a3adb3"/><path d="M0.2 11 V9.6 C0.2 7.3 3.2 6.4 5.8 6.4 C8.4 6.4 11.4 7.3 11.4 9.6 V11 Z" fill="#a3adb3"/></svg>
<div class="t" style="left:1584.3px;top:504.80px;font-size:12px;color:#3f62b8;font-weight:normal;-webkit-text-stroke:0.15px currentColor">Micheal Smith</div>
<div class="a" style="left:1742px;top:500px;width:60px;height:21px;border:1px solid #e7e7e7;border-radius:3px;box-sizing:border-box;background:#fff"></div>
<div class="t" style="left:1750.6px;top:506.11px;font-size:11.4px;color:#f56b6b;font-weight:normal;">Overdue</div>
<div class="a" style="left:965px;top:532px;width:913px;height:1px;background:#ececec"></div>
<div class="t" style="left:981.2px;top:541.01px;font-size:12.1px;color:#3f62b8;font-weight:normal;-webkit-text-stroke:0.15px currentColor">Follow Up On Complaint</div>
<div class="t" style="left:981.4px;top:560.09px;font-size:9.9px;color:#5e6266;font-weight:normal;">28 Jun. 2023, 06:45</div>
<div class="a" style="left:1073.9px;top:561px;width:1.3px;height:11.5px;background:#4d5d6a"></div>
<div class="t" style="left:1081.6px;top:560.09px;font-size:9.9px;color:#55595d;font-weight:normal;">Call</div>
<div class="a" style="left:1241px;top:545px;width:54px;height:21px;border:1px solid #e7e7e7;border-radius:3px;box-sizing:border-box;background:#fff"></div>
<div class="t" style="left:1248.8px;top:551.11px;font-size:11.4px;color:#f7993d;font-weight:normal;">Normal</div>
<svg class="a" style="left:1377px;top:548.3px" width="13" height="11" viewBox="0 0 13 11"><path d="M0 0H5.8V2.9H12.1V10.5H0Z" fill="#a5b1b8"/><g fill="#fff" opacity="0.75"><rect x="0.9" y="1" width="1.5" height="1.3"/><rect x="3.5" y="1" width="1.4" height="1.3"/><rect x="0.9" y="3.4" width="1.5" height="1.3"/><rect x="3.5" y="3.4" width="1.4" height="1.3"/><rect x="0.9" y="5.8" width="1.5" height="1.3"/><rect x="3.5" y="5.8" width="1.4" height="1.3"/><rect x="0.9" y="8.2" width="1.5" height="1.3"/><rect x="3.5" y="8.2" width="1.4" height="1.3"/></g><rect x="6.6" y="3.9" width="4.6" height="5.8" fill="#fff"/><g fill="#a5b1b8"><rect x="8.9" y="5.2" width="1.1" height="1"/><rect x="8.9" y="7.6" width="1.1" height="1"/></g></svg>
<div class="t" style="left:1401.6px;top:549.80px;font-size:12px;color:#3f62b8;font-weight:normal;-webkit-text-stroke:0.15px currentColor">AGL Group</div>
<svg class="a" style="left:1560.5px;top:548.5px" width="12" height="11" viewBox="0 0 12 11"><circle cx="5.8" cy="2.9" r="2.8" fill="#a3adb3"/><path d="M0.2 11 V9.6 C0.2 7.3 3.2 6.4 5.8 6.4 C8.4 6.4 11.4 7.3 11.4 9.6 V11 Z" fill="#a3adb3"/></svg>
<div class="t" style="left:1586.8px;top:549.80px;font-size:12px;color:#3f62b8;font-weight:normal;-webkit-text-stroke:0.15px currentColor">Jamie O&#x27;Donnell</div>
<div class="a" style="left:1742px;top:545px;width:60px;height:21px;border:1px solid #e7e7e7;border-radius:3px;box-sizing:border-box;background:#fff"></div>
<div class="t" style="left:1750.6px;top:551.11px;font-size:11.4px;color:#f56b6b;font-weight:normal;">Overdue</div>
<div class="a" style="left:965px;top:577px;width:913px;height:1px;background:#ececec"></div>
<div class="t" style="left:1338.3px;top:723.22px;font-size:12.1px;color:#25333f;font-weight:normal;">10 per view</div>
<svg class="a" style="left:1407.3px;top:728.0px" width="6" height="4" viewBox="0 0 6 4"><path d="M0 0H6L3 4Z" fill="#5c5a90"/></svg>
<svg class="a" style="left:1439px;top:723.7px" width="5" height="9.0" viewBox="0 0 5 9.0"><path d="M4 1 L1 4.5 L4 8.0" fill="none" stroke="#c2cad0" stroke-width="1.2" stroke-linecap="round" stroke-linejoin="round"/></svg>
<div class="t" style="left:1458.0px;top:724.18px;font-size:11.9px;color:#25333f;font-weight:normal;">1 of 1</div>
<svg class="a" style="left:1497px;top:723.7px" width="5" height="9.0" viewBox="0 0 5 9.0"><path d="M1 1 L4 4.5 L1 8.0" fill="none" stroke="#95a3ad" stroke-width="1.2" stroke-linecap="round" stroke-linejoin="round"/></svg>
<svg class="a" style="left:35px;top:795.2px" width="10" height="12" viewBox="0 0 10 12"><g fill="#9aa6ae"><circle cx="1.75" cy="1.75" r="1.75"/><circle cx="7.15" cy="1.75" r="1.75"/><circle cx="1.75" cy="5.95" r="1.75"/><circle cx="7.15" cy="5.95" r="1.75"/><circle cx="1.75" cy="10.15" r="1.75"/><circle cx="7.15" cy="10.15" r="1.75"/></g></svg>
<div class="t" style="left:56.3px;top:793.96px;font-size:14.4px;color:#1c232c;font-weight:normal;-webkit-text-stroke:0.35px #1c232c">Companies &amp; Providers Expiring Licences &amp; Insurance Documents</div>
<div class="a" style="left:821px;top:786px;width:62px;height:28px;background:#deedfa;border-radius:7px"></div>
<div class="t" style="left:836.3px;top:794.90px;font-size:12px;color:#1f2a44;font-weight:normal;">Filters</div>
<div class="a" style="left:890px;top:786px;width:34px;height:28px;background:#deedfa;border-radius:7px"></div>
<svg class="a" style="left:896.5px;top:795.8px" width="7.0" height="10.0" viewBox="0 0 7.0 10.0"><path d="M6.0 1 L1 5.0 L6.0 9.0" fill="none" stroke="#5a6494" stroke-width="1.8" stroke-linecap="round" stroke-linejoin="round"/></svg>
<svg class="a" style="left:909.5px;top:795.8px" width="7.0" height="10.0" viewBox="0 0 7.0 10.0"><path d="M1 1 L6.0 5.0 L1 9.0" fill="none" stroke="#5a6494" stroke-width="1.8" stroke-linecap="round" stroke-linejoin="round"/></svg>
<div class="t" style="left:38.7px;top:842.46px;font-size:12.4px;color:#3a4046;font-weight:normal;-webkit-text-stroke:0.35px #3a4046">Company Name</div>
<div class="t" style="left:257.7px;top:842.46px;font-size:12.4px;color:#3a4046;font-weight:normal;-webkit-text-stroke:0.35px #3a4046">Document</div>
<div class="t" style="left:432.2px;top:842.46px;font-size:12.4px;color:#3a4046;font-weight:normal;-webkit-text-stroke:0.35px #3a4046">State</div>
<div class="t" style="left:606.9px;top:842.46px;font-size:12.4px;color:#3a4046;font-weight:normal;-webkit-text-stroke:0.35px #3a4046">Expiry Date</div>
<div class="t" style="left:742.7px;top:842.46px;font-size:12.4px;color:#3a4046;font-weight:normal;-webkit-text-stroke:0.35px #3a4046">Expires In</div>
<div class="a" style="left:23px;top:869px;width:913px;height:1px;background:#ececec"></div>
<svg class="a" style="left:38.8px;top:877px" width="32.0" height="31.0" viewBox="0 0 32 31"><g fill="none" stroke="#1a88cf" stroke-width="3.5" stroke-linecap="round"><path d="M1.7 13.6 Q10 7 23.2 1.6"/><path d="M2.6 21.2 Q13 13.4 28 5.2"/><path d="M6.2 25.8 Q16 18.4 30.7 11.4"/><path d="M5.6 11.8 L5.6 18.6"/><path d="M26.6 6.4 L26.6 12.8"/></g><circle cx="14" cy="27.9" r="3" fill="#1a88cf"/></svg>
<div class="t" style="left:85.3px;top:886.12px;font-size:12.1px;color:#3f62b8;font-weight:normal;-webkit-text-stroke:0.15px currentColor">ABC Security</div>
<div class="t" style="left:257.7px;top:887.58px;font-size:11.9px;color:#25333f;font-weight:normal;-webkit-text-stroke:0.15px currentColor">Patrol Vichel 1</div>
<div class="t" style="left:432.2px;top:887.58px;font-size:11.9px;color:#25333f;font-weight:normal;-webkit-text-stroke:0.15px currentColor">New South Wales</div>
<div class="t" style="left:606.9px;top:887.41px;font-size:12.1px;color:#25333f;font-weight:normal;-webkit-text-stroke:0.15px currentColor">4 Apr. 2023</div>
<div class="a" style="left:743px;top:881px;width:54px;height:22px;border:1px solid #e7e7e7;border-radius:3px;box-sizing:border-box;background:#fff"></div>
<div class="t" style="left:751.0px;top:887.11px;font-size:11.4px;color:#ee2a5c;font-weight:normal;">Expired</div>
<svg class="a" style="left:877px;top:884px" width="16" height="16" viewBox="0 0 16 16"><path d="M5.2 11.8 A5.1 5.1 0 1 0 3.5 7.8" fill="none" stroke="#8d9da8" stroke-width="1.35"/><path d="M1.4 7.7 L5.6 7.7 L3.5 10.6 Z" fill="#8d9da8"/><path d="M8.3 5.6 V8.3 L10.3 9.6" fill="none" stroke="#8d9da8" stroke-width="1.15" stroke-linecap="round" stroke-linejoin="round"/></svg>
<div class="a" style="left:23px;top:914px;width:913px;height:1px;background:#ececec"></div>
<svg class="a" style="left:38.8px;top:922px" width="32.0" height="31.0" viewBox="0 0 32 31"><g fill="none" stroke="#1a88cf" stroke-width="3.5" stroke-linecap="round"><path d="M1.7 13.6 Q10 7 23.2 1.6"/><path d="M2.6 21.2 Q13 13.4 28 5.2"/><path d="M6.2 25.8 Q16 18.4 30.7 11.4"/><path d="M5.6 11.8 L5.6 18.6"/><path d="M26.6 6.4 L26.6 12.8"/></g><circle cx="14" cy="27.9" r="3" fill="#1a88cf"/></svg>
<div class="t" style="left:85.3px;top:931.12px;font-size:12.1px;color:#3f62b8;font-weight:normal;-webkit-text-stroke:0.15px currentColor">ABC Security</div>
<div class="t" style="left:257.7px;top:932.58px;font-size:11.9px;color:#25333f;font-weight:normal;-webkit-text-stroke:0.15px currentColor">Director Vehicle</div>
<div class="t" style="left:432.2px;top:932.58px;font-size:11.9px;color:#25333f;font-weight:normal;-webkit-text-stroke:0.15px currentColor">Queensland</div>
<div class="t" style="left:606.9px;top:932.41px;font-size:12.1px;color:#25333f;font-weight:normal;-webkit-text-stroke:0.15px currentColor">19 Apr. 2023</div>
<div class="a" style="left:743px;top:926px;width:54px;height:22px;border:1px solid #e7e7e7;border-radius:3px;box-sizing:border-box;background:#fff"></div>
<div class="t" style="left:751.0px;top:932.11px;font-size:11.4px;color:#ee2a5c;font-weight:normal;">Expired</div>
<svg class="a" style="left:877px;top:929px" width="16" height="16" viewBox="0 0 16 16"><path d="M5.2 11.8 A5.1 5.1 0 1 0 3.5 7.8" fill="none" stroke="#8d9da8" stroke-width="1.35"/><path d="M1.4 7.7 L5.6 7.7 L3.5 10.6 Z" fill="#8d9da8"/><path d="M8.3 5.6 V8.3 L10.3 9.6" fill="none" stroke="#8d9da8" stroke-width="1.15" stroke-linecap="round" stroke-linejoin="round"/></svg>
<div class="a" style="left:23px;top:959px;width:913px;height:1px;background:#ececec"></div>
<svg class="a" style="left:977.8px;top:795.2px" width="10" height="12" viewBox="0 0 10 12"><g fill="#9aa6ae"><circle cx="1.75" cy="1.75" r="1.75"/><circle cx="7.15" cy="1.75" r="1.75"/><circle cx="1.75" cy="5.95" r="1.75"/><circle cx="7.15" cy="5.95" r="1.75"/><circle cx="1.75" cy="10.15" r="1.75"/><circle cx="7.15" cy="10.15" r="1.75"/></g></svg>
<div class="t" style="left:997.8px;top:793.96px;font-size:14.4px;color:#1c232c;font-weight:normal;-webkit-text-stroke:0.35px #1c232c">Scheduled Emails</div>
<div class="a" style="left:1476px;top:786px;width:180px;height:28px;border:1px solid #e3e3e6;border-radius:7px;box-sizing:border-box;background:#fff"></div>
<svg class="a" style="left:1484px;top:791px" width="18" height="18" viewBox="0 0 18 18"><circle cx="7.3" cy="7.3" r="5.3" fill="none" stroke="#d5d9e6" stroke-width="1.5"/><path d="M11.2 11.2 L16 16" stroke="#d5d9e6" stroke-width="1.8" stroke-linecap="round"/></svg>
<div class="t" style="left:1507.5px;top:795.91px;font-size:12.1px;color:#b3b8c6;font-weight:normal;">Search email</div>
<div class="a" style="left:1663px;top:786px;width:162px;height:28px;border:1px solid #dfdfdf;border-radius:7px;box-sizing:border-box;background:#fff"></div>
<svg class="a" style="left:1673.5px;top:796.1600000000001px" width="7.5" height="9.599999999999909" viewBox="0 0 7.5 9.599999999999909"><path d="M6.5 1 L1 4.7999999999999545 L6.5 8.599999999999909" fill="none" stroke="#5a6494" stroke-width="1.7" stroke-linecap="round" stroke-linejoin="round"/></svg>
<svg class="a" style="left:1809.2px;top:796.1600000000001px" width="7.5" height="9.599999999999909" viewBox="0 0 7.5 9.599999999999909"><path d="M1 1 L6.5 4.7999999999999545 L1 8.599999999999909" fill="none" stroke="#5a6494" stroke-width="1.7" stroke-linecap="round" stroke-linejoin="round"/></svg>
<div class="t" style="left:1698.6px;top:797.18px;font-size:11.9px;color:#1b1f2e;font-weight:normal;">24 Oct</div>
<div class="t" style="left:1745.0px;top:797.30px;font-size:10px;color:#777;font-weight:normal;">~</div>
<div class="t" style="left:1757.0px;top:797.18px;font-size:11.9px;color:#1b1f2e;font-weight:normal;">24 Nov</div>
<div class="a" style="left:1833px;top:786px;width:34px;height:28px;background:#deedfa;border-radius:7px"></div>
<svg class="a" style="left:1839.5px;top:795.8px" width="7.0" height="10.0" viewBox="0 0 7.0 10.0"><path d="M6.0 1 L1 5.0 L6.0 9.0" fill="none" stroke="#5a6494" stroke-width="1.8" stroke-linecap="round" stroke-linejoin="round"/></svg>
<svg class="a" style="left:1852.5px;top:795.8px" width="7.0" height="10.0" viewBox="0 0 7.0 10.0"><path d="M1 1 L6.0 5.0 L1 9.0" fill="none" stroke="#5a6494" stroke-width="1.8" stroke-linecap="round" stroke-linejoin="round"/></svg>
<div class="a" style="left:968px;top:152px;width:920px;height:495px;border:2px solid #e4222b;box-sizing:border-box"></div>
</body></html>
